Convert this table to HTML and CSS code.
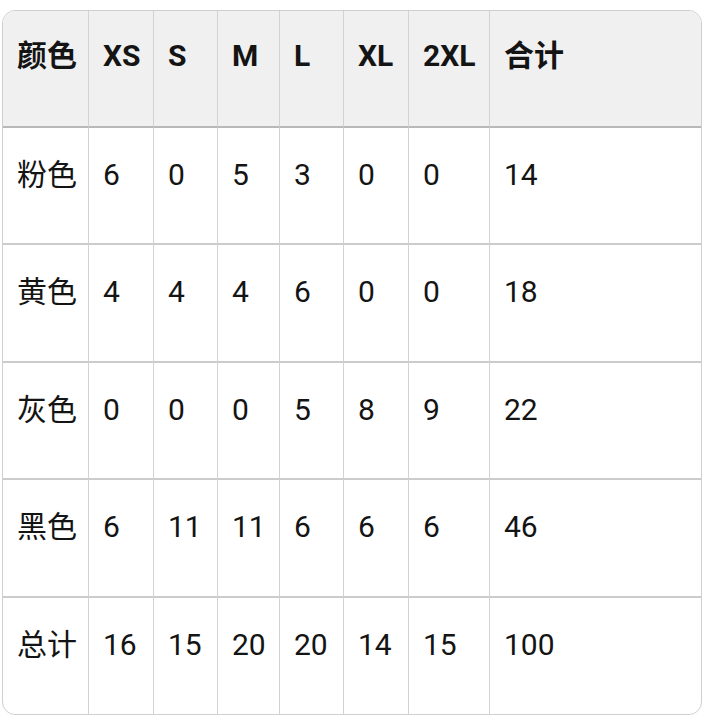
FILE: index.html
```html
<!DOCTYPE html>
<html lang="zh">
<head>
<meta charset="utf-8">
<link rel="stylesheet" href="styles.css">
</head>
<body>
<div class="table">
  <div class="cell head">颜色</div>
  <div class="cell head">XS</div>
  <div class="cell head">S</div>
  <div class="cell head">M</div>
  <div class="cell head">L</div>
  <div class="cell head">XL</div>
  <div class="cell head">2XL</div>
  <div class="cell head last">合计</div>

  <div class="cell">粉色</div>
  <div class="cell">6</div>
  <div class="cell">0</div>
  <div class="cell">5</div>
  <div class="cell">3</div>
  <div class="cell">0</div>
  <div class="cell">0</div>
  <div class="cell last">14</div>

  <div class="cell">黄色</div>
  <div class="cell">4</div>
  <div class="cell">4</div>
  <div class="cell">4</div>
  <div class="cell">6</div>
  <div class="cell">0</div>
  <div class="cell">0</div>
  <div class="cell last">18</div>

  <div class="cell">灰色</div>
  <div class="cell">0</div>
  <div class="cell">0</div>
  <div class="cell">0</div>
  <div class="cell">5</div>
  <div class="cell">8</div>
  <div class="cell">9</div>
  <div class="cell last">22</div>

  <div class="cell">黑色</div>
  <div class="cell">6</div>
  <div class="cell">11</div>
  <div class="cell">11</div>
  <div class="cell">6</div>
  <div class="cell">6</div>
  <div class="cell">6</div>
  <div class="cell last">46</div>

  <div class="cell final">总计</div>
  <div class="cell final">16</div>
  <div class="cell final">15</div>
  <div class="cell final">20</div>
  <div class="cell final">20</div>
  <div class="cell final">14</div>
  <div class="cell final">15</div>
  <div class="cell final last">100</div>
</div>
</body>
</html>
```

FILE: styles.css
```css
html, body {
  margin: 0;
  padding: 0;
  background: #ffffff;
}

body {
  padding: 10px 0 0 2px;
  font-family: Roboto, "Noto Sans CJK SC", sans-serif;
  color: #141414;
}

.table {
  width: 700px;
  box-sizing: border-box;
  border: 1px solid #cfcfcf;
  border-radius: 13px;
  overflow: hidden;
  display: grid;
  grid-template-columns: 86px 65px 64px 62px 64px 65px 81px 1fr;
  grid-template-rows: 117px 117px 118px 117px 118px 116px;
}

.cell {
  box-sizing: border-box;
  border-right: 1px solid #d2d2d2;
  border-bottom: 2px solid #cbcbcb;
  padding: 27px 0 0 14px;
  font-size: 30px;
  line-height: 40px;
  white-space: nowrap;
}

.cell.head {
  background: #f0f0f0;
  font-weight: bold;
  padding-top: 25px;
  border-bottom: 2px solid #b8b8b8;
}

.cell.last {
  border-right: none;
}

.cell.final {
  border-bottom: none;
}
```
